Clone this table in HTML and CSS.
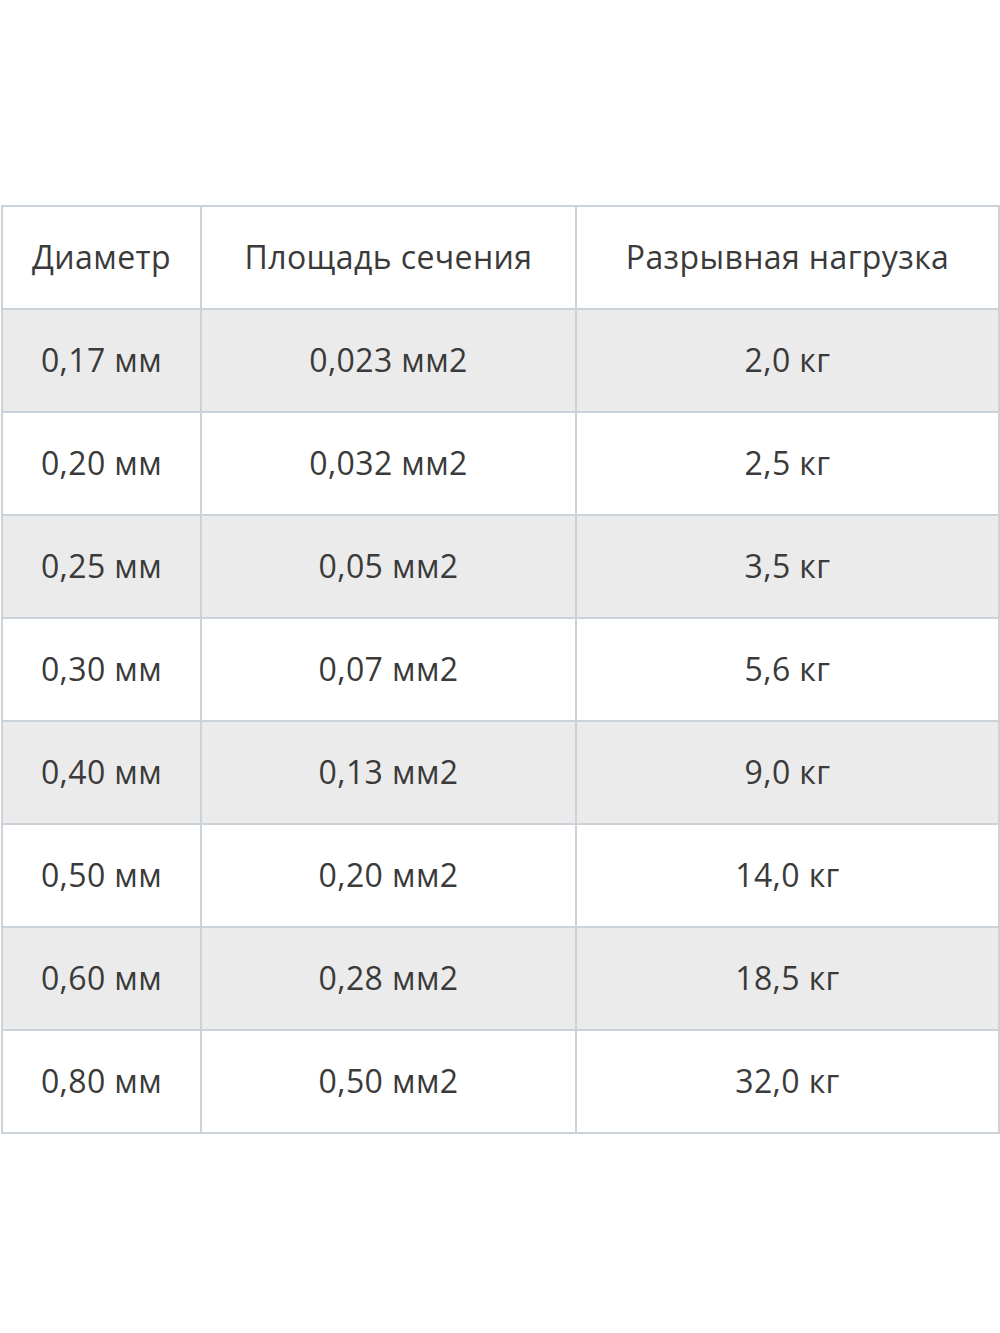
FILE: index.html
```html
<!DOCTYPE html>
<html lang="ru">
<head>
<meta charset="utf-8">
<link rel="stylesheet" href="styles.css">
</head>
<body>
<table class="spec">
  <colgroup>
    <col class="c1"><col class="c2"><col class="c3">
  </colgroup>
  <thead>
    <tr><th>Диаметр</th><th>Площадь сечения</th><th>Разрывная нагрузка</th></tr>
  </thead>
  <tbody>
    <tr><td>0,17 мм</td><td>0,023 мм2</td><td>2,0 кг</td></tr>
    <tr><td>0,20 мм</td><td>0,032 мм2</td><td>2,5 кг</td></tr>
    <tr><td>0,25 мм</td><td>0,05 мм2</td><td>3,5 кг</td></tr>
    <tr><td>0,30 мм</td><td>0,07 мм2</td><td>5,6 кг</td></tr>
    <tr><td>0,40 мм</td><td>0,13 мм2</td><td>9,0 кг</td></tr>
    <tr><td>0,50 мм</td><td>0,20 мм2</td><td>14,0 кг</td></tr>
    <tr><td>0,60 мм</td><td>0,28 мм2</td><td>18,5 кг</td></tr>
    <tr><td>0,80 мм</td><td>0,50 мм2</td><td>32,0 кг</td></tr>
  </tbody>
</table>
</body>
</html>
```
FILE: styles.css
```css
html, body {
  margin: 0;
  padding: 0;
  background: #ffffff;
}
body {
  font-family: "Open Sans", "DejaVu Sans", sans-serif;
  color: #3a3a3a;
}
.spec {
  margin: 205px 0 0 1px;
  width: 997px;
  border-collapse: collapse;
  table-layout: fixed;
}
.c1 { width: 199px; }
.c2 { width: 375px; }
.c3 { width: 423px; }
.spec th,
.spec td {
  height: 99px;
  padding: 0 0 2px 0;
  border: 2px solid #ccd2da;
  text-align: center;
  vertical-align: middle;
  font-size: 32px;
  font-weight: 400;
  line-height: 1;
  letter-spacing: 0.4px;
}
.spec tbody tr:nth-child(odd) td {
  background: #ebebeb;
}
```
